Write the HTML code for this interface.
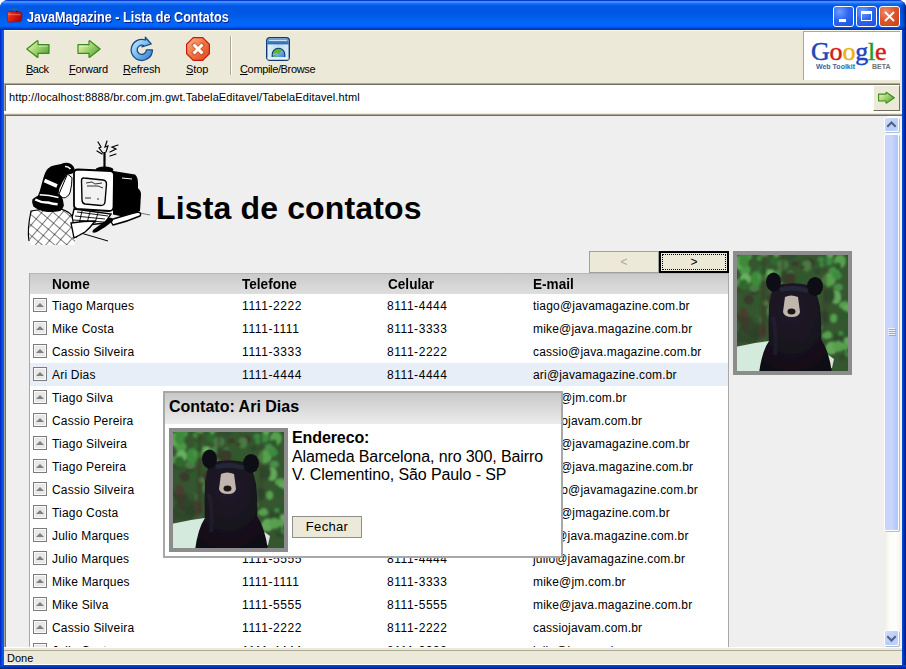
<!DOCTYPE html>
<html><head><meta charset="utf-8">
<style>
*{margin:0;padding:0;box-sizing:border-box}
html,body{width:906px;height:669px;overflow:hidden;background:#fff;font-family:"Liberation Sans",sans-serif}
.a{position:absolute}
svg{position:absolute;overflow:visible}
#win{position:absolute;left:0;top:0;width:906px;height:669px;background:linear-gradient(90deg,#0020c0 0,#0a4ee0 2px,#0a58f0 3px,#0a4ee0 902px,#0030b0 904px,#001a80 906px);border-radius:8px 8px 0 0;overflow:hidden}
#title{left:0;top:0;width:906px;height:30px;background:linear-gradient(#0a3ed0 0px,#0a3ed0 1px,#3d8eff 1px,#3a90ff 3px,#1a74fa 3px,#0862ee 5px,#0058e4 6px,#0058e4 13px,#005ee8 17px,#0064f4 21px,#0066fa 26px,#0058ea 27px,#0040c8 28.5px,#0030b0 30px)}
#ttext{left:27px;top:9px;color:#fff;font-weight:bold;font-size:14px;transform:scaleX(0.9);transform-origin:0 0;text-shadow:1px 1px 0 #0a1e8c;white-space:nowrap}
.tb{top:6px;width:21px;height:21px;border:1px solid #fff;border-radius:3px;background:radial-gradient(circle at 30% 25%,#6d9cff 0,#2f66f0 45%,#1a50e0 100%)}
#frame{left:4px;top:29px;width:898px;height:636px;background:#ece9d8}
.lbl{position:absolute;top:34px;font-size:11px;color:#000;white-space:nowrap}
.lbl u{text-decoration:underline}
#addr{left:4px;top:83px;width:896px;height:28px;background:#fff;border-top:1px solid #aca899;border-left:1px solid #aca899;box-shadow:inset 1px 1px 0 #716f64}
#content{left:4px;top:115px;width:898px;height:532px;background:#efefef;border-top:1px solid #716f64;border-left:1px solid #aca899;box-shadow:inset 1px 0 0 #716f64;overflow:hidden}
#status{left:4px;top:647px;width:898px;height:18px;background:#ece9d8;border-top:1px solid #fff;border-bottom:1px solid #fff}
#tbl{position:absolute;left:24px;top:157px;width:700px;height:400px;border-left:1px solid #a8a8a8;border-right:1px solid #a8a8a8;background:#fff}
.row{position:absolute;left:0;width:698px;height:23px;font-size:12px;color:#000;white-space:nowrap;background:#fff}
.row span{position:absolute;top:5px}
.c1{left:22px;letter-spacing:0.2px}.c2{left:212px;letter-spacing:0.6px}.c3{left:357px;letter-spacing:0.55px}.c4{left:503px;letter-spacing:0.18px}
.sb{position:absolute;left:3px;top:4px;width:14px;height:14px;border:1px solid #7b7b7b;box-shadow:inset 0 0 0 1px #fafafa;background:#e8e8e8}
.sb:after{content:"";position:absolute;left:2px;top:4px;border-left:4px solid transparent;border-right:4px solid transparent;border-bottom:4px solid #808080}
.hd{position:absolute;top:3.4px;font-size:14px;transform:scaleX(0.97);transform-origin:0 0;font-weight:bold}
</style></head><body>
<div id="win">
  <div id="frame" class="a">
    <div class="a" style="left:0;top:1px;width:898px;height:1px;background:#fcf8e4"></div>
    <!-- back -->
    <svg style="left:22px;top:11px" width="24" height="19" viewBox="0 0 24 19">
      <defs><linearGradient id="gb" x1="0" y1="0" x2="1" y2="0.7"><stop offset="0" stop-color="#e8f8c0"/><stop offset="0.35" stop-color="#c0e488"/><stop offset="1" stop-color="#5aa83a"/></linearGradient></defs>
      <path d="M0.8 9 L11.3 0.8 Q12 0.5 12 1.5 L12 4.6 L23 4.6 L23 13.3 L12 13.3 L12 16.8 Q12 17.6 11.3 17.2 Z" fill="url(#gb)" stroke="#3a8a1e" stroke-width="1.2" stroke-linejoin="round"/>
      <path d="M13 6.2 L21.5 6.2" stroke="#e8f6d0" stroke-width="0.8" opacity="0.8"/>
    </svg>
    <!-- forward -->
    <svg style="left:73px;top:11px" width="24" height="19" viewBox="0 0 24 19">
      <defs><linearGradient id="gf" x1="0" y1="0" x2="1" y2="0.7"><stop offset="0" stop-color="#e8f8c0"/><stop offset="0.35" stop-color="#c0e488"/><stop offset="1" stop-color="#5aa83a"/></linearGradient></defs>
      <path d="M23.2 9 L12.7 0.8 Q12 0.5 12 1.5 L12 4.6 L1 4.6 L1 13.3 L12 13.3 L12 16.8 Q12 17.6 12.7 17.2 Z" fill="url(#gf)" stroke="#3a8a1e" stroke-width="1.2" stroke-linejoin="round"/>
      <path d="M2.5 6.2 L11 6.2" stroke="#e8f6d0" stroke-width="0.8" opacity="0.8"/>
    </svg>
    <!-- refresh -->
    <svg style="left:127px;top:8px" width="23" height="24" viewBox="0 0 23 24">
      <defs><linearGradient id="gr" x1="0" y1="0" x2="1" y2="1"><stop offset="0" stop-color="#d8f0ff"/><stop offset="0.4" stop-color="#8cc8f4"/><stop offset="1" stop-color="#2c78c8"/></linearGradient></defs>
      <path d="M21.4 12.9 A10.6 10.6 0 1 1 14.5 3 L14.3 0.2 L20.2 7 L10.9 9.9 L12.4 8.5 A4.6 4.6 0 1 0 15.4 12.9 Z" fill="url(#gr)" stroke="#154a8c" stroke-width="1.3" stroke-linejoin="round"/>
    </svg>
    <!-- stop -->
    <svg style="left:182px;top:8px" width="24" height="24" viewBox="0 0 24 24">
      <defs><linearGradient id="gs" x1="0" y1="0" x2="1" y2="1"><stop offset="0" stop-color="#fbb890"/><stop offset="0.45" stop-color="#f07a48"/><stop offset="1" stop-color="#e04418"/></linearGradient></defs>
      <path d="M7.3 0.6 L16.7 0.6 L23.4 7.3 L23.4 16.7 L16.7 23.4 L7.3 23.4 L0.6 16.7 L0.6 7.3 Z" fill="url(#gs)" stroke="#c81810" stroke-width="1.2"/>
      <path d="M8.3 8.3 L15.7 15.7 M15.7 8.3 L8.3 15.7" stroke="#a03020" stroke-width="4.4" stroke-linecap="square" opacity="0.55"/>
      <path d="M8.6 8.6 L15.4 15.4 M15.4 8.6 L8.6 15.4" stroke="#fff" stroke-width="3" stroke-linecap="square"/>
    </svg>
    <!-- separator -->
    <div class="a" style="left:226px;top:7px;width:1px;height:39px;background:#aca899"></div>
    <div class="a" style="left:227px;top:7px;width:1px;height:39px;background:#fff"></div>
    <!-- compile -->
    <svg style="left:262px;top:8px" width="24" height="24" viewBox="0 0 24 24">
      <defs><linearGradient id="gc1" x1="0" y1="0" x2="0" y2="1"><stop offset="0" stop-color="#7ab0e0"/><stop offset="1" stop-color="#2a68b0"/></linearGradient>
      <linearGradient id="gc2" x1="0" y1="0" x2="1" y2="0"><stop offset="0" stop-color="#e4f2fc"/><stop offset="0.5" stop-color="#bcdcf6"/><stop offset="1" stop-color="#d8ecfa"/></linearGradient>
      <linearGradient id="gc3" x1="0" y1="0" x2="1" y2="1"><stop offset="0" stop-color="#d0ecff"/><stop offset="1" stop-color="#2a78c8"/></linearGradient></defs>
      <rect x="0.7" y="0.7" width="22.6" height="22.6" rx="3" fill="url(#gc2)" stroke="#0e3a78" stroke-width="1.4"/>
      <path d="M1.4 3.5 Q1.4 1.4 3.5 1.4 L20.5 1.4 Q22.6 1.4 22.6 3.5 L22.6 6.6 L1.4 6.6 Z" fill="url(#gc1)"/>
      <rect x="3" y="3" width="18" height="1" fill="#c8e0f8"/>
      <rect x="1.4" y="6.4" width="21.2" height="0.9" fill="#1a4a88"/>
      <clipPath id="glc"><path d="M6.2 20 L6.2 17.5 A6.3 6.3 0 0 1 18.8 17.5 L18.8 20 Z"/></clipPath>
      <g clip-path="url(#glc)"><rect x="5" y="10" width="15" height="11" fill="url(#gc3)"/>
      <path d="M5 12 L14 10 Q16 12 15.5 14 Q14 15 13.5 17 Q12 17.5 11.5 16 Q10 15.5 9 17 Q7 16 5 17 Z M5 19 Q8 17.5 10.5 18.5 L10 21 L5 21 Z" fill="#5ab82a"/></g>
      <path d="M6.2 20 L6.2 17.5 A6.3 6.3 0 0 1 18.8 17.5 L18.8 20" fill="none" stroke="#0e3a78" stroke-width="1.1"/>
      <rect x="1.4" y="20.4" width="21.2" height="2.2" fill="#e8eef4"/>
    </svg>
    <div class="lbl" style="left:22px;letter-spacing:-0.5px"><u>B</u>ack</div>
    <div class="lbl" style="left:65px;letter-spacing:-0.2px"><u>F</u>orward</div>
    <div class="lbl" style="left:119px;letter-spacing:-0.2px"><u>R</u>efresh</div>
    <div class="lbl" style="left:182px;letter-spacing:-0.1px"><u>S</u>top</div>
    <div class="lbl" style="left:236px;letter-spacing:-0.35px"><u>C</u>ompile/Browse</div>
    <!-- google box -->
    <div class="a" style="left:799px;top:2px;width:97px;height:49px;background:#fff;border-top:1px solid #aca899;border-left:1px solid #aca899"></div>
    <div class="a" style="left:807px;top:10px;font-family:'Liberation Serif',serif;font-size:26px;letter-spacing:-0.2px;white-space:nowrap;line-height:1;-webkit-text-stroke:0.45px currentColor"><span style="color:#2244b8">G</span><span style="color:#d02018">o</span><span style="color:#e8b410">o</span><span style="color:#2244c0">g</span><span style="color:#18a028">l</span><span style="color:#d02018">e</span></div>
    <div class="a" style="left:812px;top:34px;font-size:7px;font-weight:bold;color:#3a64a0;white-space:nowrap">Web Toolkit</div>
    <div class="a" style="left:868px;top:34px;font-size:7px;font-weight:bold;color:#707070;white-space:nowrap">BETA</div>
  </div>
  <div id="title" class="a"></div>
  <!-- toolbox icon -->
  <svg style="left:6px;top:8px" width="17" height="15" viewBox="0 0 17 15">
    <defs><linearGradient id="gt" x1="0" y1="0" x2="1" y2="0.4"><stop offset="0" stop-color="#ff7a50"/><stop offset="0.3" stop-color="#e82818"/><stop offset="1" stop-color="#b00808"/></linearGradient></defs>
    <path d="M5 2.8 Q5 1.2 7 1.2 L9.5 1.2 Q11 1.2 11 2.8" fill="none" stroke="#5a5a5a" stroke-width="1.2"/>
    <circle cx="5.2" cy="3.6" r="0.9" fill="#111"/><circle cx="10.8" cy="3.6" r="0.9" fill="#111"/>
    <path d="M1.5 5.5 Q1.5 3.8 3.5 3.8 L14 4.2 Q15.8 4.4 15.8 6.2 L15.8 11.8 Q15.8 13.6 14 13.6 L3.5 14.2 Q1.3 14.2 1.3 12.2 Z" fill="url(#gt)" stroke="#8a0a0a" stroke-width="0.6"/>
    <path d="M2.5 6.5 L14.5 6.8" stroke="#ff9a80" stroke-width="0.8" opacity="0.7"/>
  </svg>
  <div class="a" style="left:900px;top:0;width:6px;height:30px;background:linear-gradient(90deg,rgba(0,20,120,0),rgba(0,20,120,0.35) 60%,rgba(0,10,90,0.8))"></div>
  <div id="ttext" class="a">JavaMagazine - Lista de Contatos</div>
  <div class="a tb" style="left:833px"><div class="a" style="left:5px;top:12px;width:7px;height:3px;background:#fff"></div></div>
  <div class="a tb" style="left:856px"><div class="a" style="left:4px;top:4px;width:11px;height:10px;border:1px solid #fff;border-top:3px solid #fff"></div></div>
  <div class="a tb" style="left:879px;background:radial-gradient(circle at 30% 25%,#f08a6a 0,#e0562a 45%,#c8401c 100%)">
    <svg style="left:4px;top:4px" width="11" height="11"><path d="M1 1 L10 10 M10 1 L1 10" stroke="#fff" stroke-width="1.8"/></svg>
  </div>

  <div id="addr" class="a">
    <div class="a" style="left:4px;top:7px;font-size:11px;letter-spacing:0.12px;white-space:nowrap">http://localhost:8888/br.com.jm.gwt.TabelaEditavel/TabelaEditavel.html</div>
    <div class="a" style="left:868px;top:1px;width:27px;height:26px;background:#ece9d8;border-top:1px solid #fff;border-left:1px solid #fff;border-right:1px solid #716f64;border-bottom:1px solid #716f64">
      <svg style="left:4px;top:6px" width="17" height="13" viewBox="0 0 17 13">
        <path d="M16.3 5.8 L8.6 0.5 Q8 0.2 8 1 L8 2.1 L0.6 2.1 L0.6 9 L8 9 L8 10.6 Q8 11.4 8.6 11.1 Z" fill="url(#gf)" stroke="#3a8a1e" stroke-width="1.1" stroke-linejoin="round"/>
      </svg>
    </div>
  </div>
  <div class="a" style="left:4px;top:111px;width:898px;height:2px;background:#fdfcf5"></div><div class="a" style="left:4px;top:114px;width:898px;height:1px;background:#aca899"></div>
  <div id="content" class="a">
    <svg style="left:23px;top:22px" width="125" height="110" viewBox="28 138 125 110">
<defs><pattern id="hatch" width="8" height="8" patternUnits="userSpaceOnUse" patternTransform="rotate(40)"><rect width="8" height="8" fill="#fff"/><path d="M0 0 H8 M0 0 V8" stroke="#000" stroke-width="1"/></pattern></defs>
<g stroke="#000" fill="none" stroke-width="1.2" stroke-linecap="round">
<path d="M98 142 L101 147 L99 148 L103 153"/><path d="M107 141 L105 147 L108 146 L106 152"/><path d="M118 145 L112 147 L116 149 L110 152"/><path d="M97 151 L102 154"/><path d="M110 156 L116 154"/>
</g>
<path d="M104.5 152 L104.5 168" stroke="#000" stroke-width="2.2"/>
<ellipse cx="104.5" cy="169.5" rx="9" ry="3" fill="#000"/>
<path d="M113 171 L135 174.5 Q138 177 138 183 L138 212.5 Q134 217 129.5 218 L113 214.5 Z" fill="#000"/>
<path d="M135 187 Q141 189 141 194 L140 211 L137 212 Z" fill="#000"/>
<path d="M122 178 L132 179" stroke="#fff" stroke-width="1"/>
<path d="M78 169.5 L111 171 Q114 171.5 114 175 L113.5 207 Q113 211 109 211 L77 209 Q74 208.5 74 205 L74 173 Q74 169.5 78 169.5 Z" fill="#fff" stroke="#000" stroke-width="1.8"/>
<path d="M84 178 L103 180 Q106.5 180.5 106.5 184 L105 202 Q104.5 205.5 101 205.5 L85 204 Q82 203.5 82 200 L81.5 181 Q81.5 177.5 84 178 Z" fill="#f2f2f2" stroke="#000" stroke-width="1.4"/>
<path d="M86 183 L92 182 L95 184 L102 183 M87 186 L98 186 L103 188 M85 198 L91 198 M97 199 L99 199" stroke="#000" stroke-width="0.8" fill="none"/>
<path d="M140 213 L150 215" stroke="#555" stroke-width="0.8" fill="none"/>
<path d="M110 220 Q126 215 138 212 Q142 213 140 216 Q126 222 113 225 Z" fill="#fff" stroke="#000" stroke-width="1.4"/>
<path d="M74 209 L111 214 L105 223 L70 227 Z" fill="#fff" stroke="#000" stroke-width="1.4"/>
<path d="M77 212 L108 216 M75 216 L105 219 M73 220 L104 222 M82 211 L79 224 M90 212 L87 223 M98 213 L95 223" stroke="#000" stroke-width="0.9"/>
<path d="M93 230 Q101 224 109 218 Q113 217 113 221 Q106 227 97 232 Q91 234 93 230 Z" fill="#000"/>
<path d="M74 231 L108 241" stroke="#000" stroke-width="1"/>
<path d="M31 211 Q46 208 61 209 Q70 212 72 216 L76 238 L74 245 L31 245 Q28 232 29 230 Z" fill="url(#hatch)"/><path d="M29 241 Q27 230 31 211 Q46 208 61 209 Q70 212 72 216 L76 238" fill="none" stroke="#000" stroke-width="1.2"/>
<path d="M71 223 Q84 221 95 221 Q90 228 85 232 Q78 236 74 238 Z" fill="#fff" stroke="#000" stroke-width="1.3"/>
<path d="M59 194 Q62 199 65.7 197.5 Q70 195 70.2 192 Q72 185 72 177.7 L67.5 174 Z" fill="#fff" stroke="#000" stroke-width="1"/>
<path d="M43.2 178.6 Q45 172 47.7 168.8 Q51 165.5 54.9 165.2 L61.2 164 Q64 162.5 68.4 162.9 Q73 164 74.6 168.8 Q74.5 172 72.8 173.2 Q70 174.5 67.5 174 Q62 182 59.4 188.5 L58.5 193.9 Q62 196 63 200 L63.9 205.5 Q63 209 60.3 210.9 Q53 212.5 45.9 211.8 Q38 210 33.4 206.4 Q31.5 202 32.5 199.3 Q35 197 37.9 195.7 L39.7 191.2 Z" fill="#000"/>
<path d="M65 166.5 Q68 166 70.5 169" stroke="#fff" stroke-width="1.6" fill="none"/>
<path d="M44.5 180.5 Q50 183 57 186" stroke="#fff" stroke-width="3.6" fill="none"/>
<path d="M39.7 194.8 Q49 195 58.5 197.5" stroke="#fff" stroke-width="1.5" fill="none"/>
<path d="M35.2 199.5 Q42 203 48 202.5 Q53 204 57.6 204.3" stroke="#fff" stroke-width="2.4" fill="none"/>
</svg>

    <div class="a" style="left:151px;top:76px;font-size:32px;font-weight:bold;letter-spacing:0.15px;white-space:nowrap;line-height:1">Lista de contatos</div>
    <!-- pager -->
    <div class="a" style="left:584px;top:135px;width:70px;height:22px;background:#ece9d8;border:1px solid #a0a0a0;font-size:12px;color:#aca899;text-align:center;line-height:20px">&lt;</div>
    <div class="a" style="left:654px;top:135px;width:70px;height:22px;background:#ece9d8;border:2px solid #000;font-size:12px;color:#000;text-align:center;line-height:18px"><div class="a" style="left:1px;top:1px;right:1px;bottom:1px;border:1px dotted #000"></div>&gt;</div>
    <div id="tbl">
      <div class="a" style="left:0;top:0;width:698px;height:21px;background:linear-gradient(#b8b8b8 0,#b8b8b8 1px,#cbcbcb 1px,#dedede)">
        <span class="hd" style="left:22px">Nome</span><span class="hd" style="left:212px">Telefone</span><span class="hd" style="left:358px">Celular</span><span class="hd" style="left:503px">E-mail</span>
      </div>
      <div class="row" style="top:21px"><i class="sb"></i><span class="c1">Tiago Marques</span><span class="c2">1111-2222</span><span class="c3">8111-4444</span><span class="c4">tiago@javamagazine.com.br</span></div>
<div class="row" style="top:44px"><i class="sb"></i><span class="c1">Mike Costa</span><span class="c2">1111-1111</span><span class="c3">8111-3333</span><span class="c4">mike@java.magazine.com.br</span></div>
<div class="row" style="top:67px"><i class="sb"></i><span class="c1">Cassio Silveira</span><span class="c2">1111-3333</span><span class="c3">8111-2222</span><span class="c4">cassio@java.magazine.com.br</span></div>
<div class="row" style="top:90px;background:#e8eef7"><i class="sb"></i><span class="c1">Ari Dias</span><span class="c2">1111-4444</span><span class="c3">8111-4444</span><span class="c4">ari@javamagazine.com.br</span></div>
<div class="row" style="top:113px"><i class="sb"></i><span class="c1">Tiago Silva</span><span class="c2">1111-5555</span><span class="c3">8111-5555</span><span class="c4">tiago@jm.com.br</span></div>
<div class="row" style="top:136px"><i class="sb"></i><span class="c1">Cassio Pereira</span><span class="c2">1111-2222</span><span class="c3">8111-2222</span><span class="c4">cassiojavam.com.br</span></div>
<div class="row" style="top:159px"><i class="sb"></i><span class="c1">Tiago Silveira</span><span class="c2">1111-3333</span><span class="c3">8111-3333</span><span class="c4">tiago@javamagazine.com.br</span></div>
<div class="row" style="top:182px"><i class="sb"></i><span class="c1">Tiago Pereira</span><span class="c2">1111-4444</span><span class="c3">8111-4444</span><span class="c4">tiago@java.magazine.com.br</span></div>
<div class="row" style="top:205px"><i class="sb"></i><span class="c1">Cassio Silveira</span><span class="c2">1111-1111</span><span class="c3">8111-1111</span><span class="c4">cassio@javamagazine.com.br</span></div>
<div class="row" style="top:228px"><i class="sb"></i><span class="c1">Tiago Costa</span><span class="c2">1111-2222</span><span class="c3">8111-2222</span><span class="c4">tiago@jmagazine.com.br</span></div>
<div class="row" style="top:251px"><i class="sb"></i><span class="c1">Julio Marques</span><span class="c2">1111-3333</span><span class="c3">8111-3333</span><span class="c4">julio@java.magazine.com.br</span></div>
<div class="row" style="top:274px"><i class="sb"></i><span class="c1">Julio Marques</span><span class="c2">1111-5555</span><span class="c3">8111-4444</span><span class="c4">julio@javamagazine.com.br</span></div>
<div class="row" style="top:297px"><i class="sb"></i><span class="c1">Mike Marques</span><span class="c2">1111-1111</span><span class="c3">8111-3333</span><span class="c4">mike@jm.com.br</span></div>
<div class="row" style="top:320px"><i class="sb"></i><span class="c1">Mike Silva</span><span class="c2">1111-5555</span><span class="c3">8111-5555</span><span class="c4">mike@java.magazine.com.br</span></div>
<div class="row" style="top:343px"><i class="sb"></i><span class="c1">Cassio Silveira</span><span class="c2">1111-2222</span><span class="c3">8111-2222</span><span class="c4">cassiojavam.com.br</span></div>
<div class="row" style="top:366px"><i class="sb"></i><span class="c1">Julio Costa</span><span class="c2">1111-4444</span><span class="c3">8111-3333</span><span class="c4">julio@jm.com.br</span></div>
    </div>
    <!-- bear right -->
    <div class="a" style="left:728px;top:135px;width:119px;height:124px;background:#8c8c8c;padding:4px"><svg style="position:static;display:block" width="111" height="116" viewBox="0 0 111 116"><defs><filter id="bl" x="-5%" y="-5%" width="110%" height="110%"><feGaussianBlur stdDeviation="1.1"/></filter><filter id="bl2" x="-5%" y="-5%" width="110%" height="110%"><feGaussianBlur stdDeviation="0.6"/></filter><radialGradient id="bh" cx="0.45" cy="0.3" r="0.7"><stop offset="0" stop-color="#221c2a"/><stop offset="1" stop-color="#110d16"/></radialGradient><clipPath id="bc"><rect width="111" height="116"/></clipPath></defs><g clip-path="url(#bc)"><rect width="111" height="116" fill="#35562f"/><g filter="url(#bl)"><ellipse cx="49.9" cy="57.5" rx="5.7" ry="5.6" fill="#2e4e30"/><ellipse cx="97.0" cy="17.5" rx="5.3" ry="5.2" fill="#63a85a"/><ellipse cx="89.8" cy="7.2" rx="3.6" ry="2.4" fill="#2e4a2c"/><ellipse cx="71.2" cy="61.3" rx="3.9" ry="3.7" fill="#2e4e30"/><ellipse cx="73.1" cy="64.3" rx="5.4" ry="3.5" fill="#2f5a2c"/><ellipse cx="19.3" cy="23.1" rx="2.6" ry="2.5" fill="#4a9844"/><ellipse cx="66.1" cy="18.1" rx="3.3" ry="2.8" fill="#2f5a2c"/><ellipse cx="74.5" cy="46.4" rx="3.5" ry="4.9" fill="#2f5a2c"/><ellipse cx="79.8" cy="31.0" rx="3.3" ry="2.7" fill="#3a8a40"/><ellipse cx="62.9" cy="8.7" rx="2.9" ry="2.4" fill="#2f5a2c"/><ellipse cx="109.1" cy="88.5" rx="2.5" ry="1.9" fill="#3a8a40"/><ellipse cx="52.0" cy="102.9" rx="3.9" ry="2.6" fill="#4a7a44"/><ellipse cx="88.1" cy="26.1" rx="2.8" ry="2.4" fill="#488e46"/><ellipse cx="85.7" cy="9.7" rx="3.4" ry="2.3" fill="#3a8a40"/><ellipse cx="51.4" cy="49.6" rx="4.9" ry="3.7" fill="#2e4e30"/><ellipse cx="19.3" cy="76.0" rx="3.0" ry="3.3" fill="#2a4a28"/><ellipse cx="43.2" cy="103.9" rx="2.5" ry="3.2" fill="#2e4e30"/><ellipse cx="32.6" cy="92.6" rx="3.2" ry="3.0" fill="#2e4e30"/><ellipse cx="72.1" cy="7.8" rx="6.0" ry="4.6" fill="#3a3a2c"/><ellipse cx="-1.9" cy="62.9" rx="5.4" ry="4.9" fill="#2a4a28"/><ellipse cx="7.5" cy="59.9" rx="3.4" ry="3.6" fill="#4a3c30"/><ellipse cx="69.8" cy="10.7" rx="4.6" ry="5.8" fill="#4a7a44"/><ellipse cx="98.4" cy="16.7" rx="3.0" ry="4.0" fill="#63a85a"/><ellipse cx="26.2" cy="17.5" rx="5.1" ry="6.9" fill="#58a850"/><ellipse cx="77.4" cy="38.9" rx="4.2" ry="2.8" fill="#3a8a40"/><ellipse cx="9.1" cy="1.2" rx="5.9" ry="4.6" fill="#4a9844"/><ellipse cx="27.1" cy="86.0" rx="4.6" ry="3.8" fill="#3a5a34"/><ellipse cx="105.7" cy="102.5" rx="2.9" ry="2.9" fill="#2e4a2c"/><ellipse cx="96.7" cy="63.3" rx="3.5" ry="4.6" fill="#56a04e"/><ellipse cx="84.6" cy="4.5" rx="3.9" ry="3.1" fill="#3a8a40"/><ellipse cx="17.6" cy="36.8" rx="4.5" ry="3.2" fill="#3a3a2c"/><ellipse cx="13.2" cy="45.6" rx="3.7" ry="4.3" fill="#2e4e30"/><ellipse cx="65.4" cy="12.2" rx="2.6" ry="1.6" fill="#3a3a2c"/><ellipse cx="79.0" cy="101.0" rx="2.6" ry="2.9" fill="#488e46"/><ellipse cx="4.9" cy="30.6" rx="3.0" ry="2.0" fill="#5a8a50"/><ellipse cx="60.9" cy="76.6" rx="5.7" ry="6.7" fill="#4a7a44"/><ellipse cx="89.8" cy="95.8" rx="3.7" ry="4.3" fill="#3a8a40"/><ellipse cx="98.9" cy="42.1" rx="5.3" ry="6.8" fill="#63a85a"/><ellipse cx="-1.3" cy="68.5" rx="3.8" ry="2.3" fill="#2a4a28"/><ellipse cx="6.4" cy="66.1" rx="6.0" ry="7.8" fill="#4a3c30"/><ellipse cx="42.4" cy="76.4" rx="4.5" ry="4.3" fill="#2e4e30"/><ellipse cx="6.8" cy="78.0" rx="2.6" ry="2.8" fill="#2e6a30"/><ellipse cx="-0.4" cy="100.4" rx="2.9" ry="3.5" fill="#2e6a30"/><ellipse cx="26.9" cy="-1.8" rx="3.6" ry="4.1" fill="#58a850"/><ellipse cx="57.7" cy="78.4" rx="3.7" ry="5.0" fill="#5a8a50"/><ellipse cx="101.3" cy="32.3" rx="4.8" ry="3.7" fill="#488e46"/><ellipse cx="91.0" cy="78.5" rx="3.2" ry="2.5" fill="#56a04e"/><ellipse cx="65.2" cy="31.2" rx="3.0" ry="3.0" fill="#2f5a2c"/><ellipse cx="80.2" cy="99.6" rx="3.5" ry="2.6" fill="#488e46"/><ellipse cx="52.1" cy="97.0" rx="5.4" ry="4.9" fill="#2e4e30"/><ellipse cx="54.8" cy="31.1" rx="5.4" ry="7.5" fill="#5a8a50"/><ellipse cx="34.5" cy="86.5" rx="3.5" ry="3.8" fill="#3a3a2c"/><ellipse cx="63.8" cy="30.4" rx="5.3" ry="3.2" fill="#4a7a44"/><ellipse cx="44.4" cy="17.5" rx="5.2" ry="4.2" fill="#4a7a44"/><ellipse cx="90.2" cy="103.3" rx="2.9" ry="2.0" fill="#63a85a"/><ellipse cx="73.6" cy="84.2" rx="5.9" ry="6.7" fill="#4a7a44"/><ellipse cx="93.4" cy="24.7" rx="5.0" ry="6.0" fill="#63a85a"/><ellipse cx="80.6" cy="16.3" rx="3.5" ry="3.0" fill="#2e4a2c"/><ellipse cx="107.8" cy="51.0" rx="6.0" ry="4.4" fill="#2e4a2c"/><ellipse cx="103.0" cy="6.4" rx="5.8" ry="6.8" fill="#56a04e"/><ellipse cx="49.7" cy="18.3" rx="5.6" ry="3.4" fill="#2e4e30"/><ellipse cx="63.6" cy="92.0" rx="5.3" ry="7.2" fill="#5a8a50"/><ellipse cx="35.2" cy="103.1" rx="2.8" ry="3.7" fill="#2f5a2c"/><ellipse cx="22.0" cy="94.2" rx="5.9" ry="8.2" fill="#3f6a3a"/><ellipse cx="111.3" cy="97.7" rx="3.4" ry="4.0" fill="#3a8a40"/><ellipse cx="37.8" cy="5.9" rx="4.0" ry="4.2" fill="#2e6a2e"/><ellipse cx="54.0" cy="0.1" rx="5.3" ry="3.5" fill="#2f5a2c"/><ellipse cx="17.2" cy="33.2" rx="5.3" ry="3.7" fill="#4a7a44"/><ellipse cx="114.0" cy="94.3" rx="4.3" ry="4.9" fill="#488e46"/><ellipse cx="107.7" cy="50.2" rx="5.8" ry="3.9" fill="#56a04e"/><ellipse cx="48.4" cy="57.3" rx="5.4" ry="5.7" fill="#4a7a44"/><ellipse cx="58.2" cy="88.1" rx="4.5" ry="3.8" fill="#5a8a50"/><ellipse cx="108.7" cy="91.0" rx="4.6" ry="3.9" fill="#56a04e"/><ellipse cx="110.3" cy="53.6" rx="4.5" ry="3.4" fill="#63a85a"/><ellipse cx="10.4" cy="-2.5" rx="3.8" ry="3.9" fill="#3c8a3a"/><ellipse cx="57.4" cy="40.3" rx="5.3" ry="5.6" fill="#5a8a50"/><ellipse cx="7.9" cy="15.0" rx="5.8" ry="5.6" fill="#4a9844"/><ellipse cx="28.5" cy="48.1" rx="2.9" ry="2.8" fill="#5a8a50"/><ellipse cx="58.4" cy="8.7" rx="4.0" ry="2.5" fill="#3a3a2c"/><ellipse cx="12.1" cy="81.2" rx="2.6" ry="1.9" fill="#3a5a34"/><ellipse cx="-1.6" cy="27.7" rx="5.0" ry="4.0" fill="#4a9844"/><ellipse cx="9.3" cy="75.9" rx="2.9" ry="3.0" fill="#4a3c30"/><ellipse cx="81.0" cy="72.7" rx="5.6" ry="3.4" fill="#2e4a2c"/><ellipse cx="45.4" cy="54.2" rx="3.1" ry="2.3" fill="#2e4e30"/><ellipse cx="71.7" cy="54.2" rx="5.5" ry="6.0" fill="#4a7a44"/><ellipse cx="24.2" cy="77.0" rx="5.3" ry="7.1" fill="#4a3c30"/><ellipse cx="67.6" cy="93.2" rx="3.2" ry="3.9" fill="#4a7a44"/><ellipse cx="100.8" cy="11.5" rx="3.3" ry="3.9" fill="#2a5a2c"/><ellipse cx="42.4" cy="44.0" rx="5.8" ry="6.0" fill="#4a7a44"/><ellipse cx="20.5" cy="64.8" rx="5.3" ry="3.6" fill="#3f6a3a"/><ellipse cx="76.8" cy="95.4" rx="5.9" ry="4.1" fill="#63a85a"/><ellipse cx="71.3" cy="34.1" rx="6.0" ry="7.6" fill="#2f5a2c"/><ellipse cx="53.4" cy="-0.4" rx="5.2" ry="5.6" fill="#2e4e30"/><ellipse cx="53.3" cy="17.5" rx="2.9" ry="2.1" fill="#4a7a44"/><ellipse cx="112.9" cy="97.1" rx="2.8" ry="1.8" fill="#2e4a2c"/><ellipse cx="51.1" cy="79.6" rx="3.6" ry="3.5" fill="#2e4e30"/><ellipse cx="38.5" cy="19.7" rx="3.8" ry="4.2" fill="#3c8a3a"/><ellipse cx="95.8" cy="16.6" rx="4.1" ry="4.9" fill="#488e46"/><ellipse cx="104.9" cy="62.3" rx="2.8" ry="3.5" fill="#2a5a2c"/><ellipse cx="101.5" cy="83.6" rx="5.0" ry="6.4" fill="#2e4a2c"/><ellipse cx="106.9" cy="58.5" rx="3.2" ry="3.4" fill="#2a5a2c"/><ellipse cx="91.2" cy="24.9" rx="5.7" ry="6.8" fill="#56a04e"/><ellipse cx="92.3" cy="40.8" rx="5.6" ry="7.4" fill="#2e4a2c"/><ellipse cx="40.3" cy="43.6" rx="3.1" ry="2.4" fill="#4a7a44"/><ellipse cx="5.3" cy="33.9" rx="4.1" ry="2.5" fill="#3a3a2c"/><ellipse cx="112.9" cy="94.5" rx="2.7" ry="2.2" fill="#2e4a2c"/><ellipse cx="32.0" cy="20.3" rx="3.9" ry="2.9" fill="#3c8a3a"/><ellipse cx="42.6" cy="105.0" rx="4.7" ry="5.5" fill="#5a8a50"/><ellipse cx="111.7" cy="-0.5" rx="4.7" ry="5.5" fill="#2a5a2c"/><ellipse cx="48.9" cy="51.5" rx="5.2" ry="5.8" fill="#2f5a2c"/><ellipse cx="8.5" cy="24.1" rx="5.7" ry="5.9" fill="#6ab060"/><ellipse cx="45.6" cy="53.2" rx="5.5" ry="3.7" fill="#5a8a50"/><ellipse cx="91.7" cy="5.2" rx="4.6" ry="5.5" fill="#3a8a40"/><ellipse cx="42.2" cy="98.4" rx="3.9" ry="5.3" fill="#5a8a50"/><ellipse cx="60.4" cy="61.4" rx="4.0" ry="4.0" fill="#3a3a2c"/><ellipse cx="58.6" cy="61.6" rx="3.8" ry="3.1" fill="#3a3a2c"/><ellipse cx="62.6" cy="27.6" rx="5.0" ry="4.2" fill="#2f5a2c"/><ellipse cx="87.4" cy="60.3" rx="4.7" ry="4.4" fill="#2e4a2c"/><ellipse cx="42.6" cy="93.9" rx="5.1" ry="3.3" fill="#3a3a2c"/><ellipse cx="5.6" cy="94.8" rx="4.0" ry="3.9" fill="#3a5a34"/><ellipse cx="2.3" cy="7.6" rx="5.3" ry="7.1" fill="#58a850"/><ellipse cx="111.5" cy="85.2" rx="4.6" ry="3.2" fill="#63a85a"/><ellipse cx="45.8" cy="9.7" rx="5.5" ry="4.9" fill="#4a7a44"/><ellipse cx="11.5" cy="44.8" rx="4.8" ry="4.7" fill="#3a3a2c"/><ellipse cx="71.8" cy="70.7" rx="3.8" ry="4.5" fill="#4a7a44"/><ellipse cx="108.5" cy="76.3" rx="3.3" ry="2.3" fill="#2a5a2c"/><ellipse cx="88.8" cy="64.5" rx="3.8" ry="3.1" fill="#2e4a2c"/><ellipse cx="81.8" cy="72.5" rx="3.2" ry="2.6" fill="#56a04e"/><ellipse cx="19.2" cy="23.9" rx="5.9" ry="7.9" fill="#3c8a3a"/><ellipse cx="70.5" cy="-2.0" rx="3.4" ry="2.1" fill="#2f5a2c"/><ellipse cx="9.0" cy="55.5" rx="2.8" ry="1.8" fill="#3a5a34"/><ellipse cx="61.4" cy="65.2" rx="3.8" ry="3.7" fill="#4a7a44"/><ellipse cx="36.6" cy="50.4" rx="3.0" ry="3.8" fill="#2f5a2c"/><ellipse cx="49.3" cy="85.8" rx="5.4" ry="6.6" fill="#5a8a50"/><ellipse cx="46.7" cy="24.9" rx="5.3" ry="4.8" fill="#2e4e30"/><ellipse cx="35.1" cy="56.3" rx="5.1" ry="6.8" fill="#5a8a50"/><ellipse cx="73.5" cy="59.7" rx="4.1" ry="3.5" fill="#2e4e30"/><ellipse cx="6.7" cy="57.9" rx="4.2" ry="4.8" fill="#4a3c30"/><ellipse cx="93.3" cy="-2.0" rx="3.6" ry="4.8" fill="#63a85a"/><ellipse cx="6.6" cy="29.8" rx="5.0" ry="5.8" fill="#2e6a2e"/><ellipse cx="100.2" cy="20.6" rx="4.8" ry="4.1" fill="#3a8a40"/><ellipse cx="34.7" cy="44.6" rx="4.6" ry="6.1" fill="#3a3a2c"/><ellipse cx="48.2" cy="83.7" rx="3.6" ry="3.0" fill="#5a8a50"/><ellipse cx="110.2" cy="75.8" rx="4.3" ry="2.9" fill="#2a5a2c"/><ellipse cx="-0.2" cy="70.1" rx="4.5" ry="5.6" fill="#3f6a3a"/><ellipse cx="40.1" cy="39.1" rx="3.0" ry="3.3" fill="#4a7a44"/><ellipse cx="17.7" cy="79.0" rx="5.6" ry="4.6" fill="#2a4a28"/><ellipse cx="22.9" cy="3.2" rx="3.1" ry="2.6" fill="#3c8a3a"/><ellipse cx="73.2" cy="83.9" rx="2.7" ry="2.8" fill="#2e4e30"/><ellipse cx="6.8" cy="5.8" rx="5.1" ry="6.7" fill="#3c8a3a"/><ellipse cx="0.0" cy="67.6" rx="2.8" ry="3.6" fill="#2e6a30"/><ellipse cx="25.7" cy="20.8" rx="5.2" ry="5.3" fill="#4a9844"/><ellipse cx="43.1" cy="33.5" rx="5.9" ry="6.7" fill="#5a8a50"/><ellipse cx="54.1" cy="83.9" rx="2.8" ry="3.0" fill="#2f5a2c"/><ellipse cx="45.0" cy="86.2" rx="4.8" ry="6.2" fill="#5a8a50"/><ellipse cx="94.6" cy="93.0" rx="5.9" ry="6.5" fill="#63a85a"/><ellipse cx="39.4" cy="-1.9" rx="2.9" ry="3.9" fill="#58a850"/><ellipse cx="25.7" cy="14.5" rx="4.7" ry="5.4" fill="#2e6a2e"/><ellipse cx="20.9" cy="42.9" rx="3.5" ry="4.8" fill="#2f5a2c"/><ellipse cx="52.2" cy="75.9" rx="3.6" ry="2.6" fill="#4a7a44"/><ellipse cx="103.7" cy="78.3" rx="2.6" ry="2.5" fill="#3a8a40"/><ellipse cx="33.6" cy="18.3" rx="3.8" ry="4.0" fill="#6ab060"/><ellipse cx="80.9" cy="61.2" rx="3.3" ry="2.5" fill="#2a5a2c"/><ellipse cx="44.1" cy="95.4" rx="5.8" ry="6.4" fill="#2e4e30"/><ellipse cx="53.1" cy="25.1" rx="5.6" ry="7.5" fill="#3a3a2c"/><ellipse cx="74.2" cy="80.3" rx="2.8" ry="3.6" fill="#5a8a50"/><ellipse cx="2.8" cy="99.3" rx="5.3" ry="4.8" fill="#3f6a3a"/><ellipse cx="90.0" cy="80.6" rx="5.3" ry="3.4" fill="#56a04e"/><ellipse cx="101.4" cy="91.4" rx="5.7" ry="5.4" fill="#56a04e"/><ellipse cx="80.5" cy="62.5" rx="3.1" ry="2.2" fill="#2a5a2c"/><rect x="24" y="0" width="5" height="80" fill="#3a3428" opacity="0.45"/><rect x="44" y="0" width="4" height="30" fill="#3a3428" opacity="0.4"/><rect x="86" y="0" width="4" height="70" fill="#3a3028" opacity="0.35"/><rect x="0" y="62" width="22" height="26" fill="#2a3a26" opacity="0.5"/></g><g filter="url(#bl2)"><path d="M-2 92 L18 88 L32 86 L31 118 L-2 118 Z" fill="#d4eadc"/><path d="M90 99 L97 104 L95 113 L88 113 Z" fill="#dce4dc"/><path d="M36 31 Q57 25 78 32 L83 52 Q85 72 84 84 Q92 96 95 118 L22 118 Q25 96 32 86 Q31 70 32 50 Z" fill="url(#bh)"/><ellipse cx="36.5" cy="27" rx="7.5" ry="9.5" fill="#0f0c14"/><ellipse cx="78" cy="31.5" rx="8" ry="9.5" fill="#0f0c14"/><path d="M42 33 Q57 28 72 34 L70 38 Q57 34 44 37 Z" fill="#2e3850" opacity="0.45"/><path d="M34 62 Q38 80 36 100 L40 100 Q42 80 38 62 Z" fill="#3a4658" opacity="0.2"/><path d="M48 42 Q54 39 61 42 L63 57 Q62 62 55 62 Q47 62 46 57 Z" fill="#c0b6ae"/><ellipse cx="54.5" cy="56.5" rx="4" ry="3" fill="#1a1418"/></g></g></svg></div>
    <!-- dialog -->
    <div class="a" style="left:158px;top:275px;width:400px;height:167px;background:#fff;border:2px solid #a8a8a8">
      <div class="a" style="left:0;top:0;width:396px;height:31px;background:linear-gradient(#c8c8c8,#ececec)"></div>
      <div class="a" style="left:4px;top:5px;font-size:16px;font-weight:bold;white-space:nowrap">Contato: Ari Dias</div>
      <div class="a" style="left:4px;top:35px;width:119px;height:124px;background:#8c8c8c;padding:4px"><svg style="position:static;display:block" width="111" height="116" viewBox="0 0 111 116"><defs><filter id="bl" x="-5%" y="-5%" width="110%" height="110%"><feGaussianBlur stdDeviation="1.1"/></filter><filter id="bl2" x="-5%" y="-5%" width="110%" height="110%"><feGaussianBlur stdDeviation="0.6"/></filter><radialGradient id="bh" cx="0.45" cy="0.3" r="0.7"><stop offset="0" stop-color="#221c2a"/><stop offset="1" stop-color="#110d16"/></radialGradient><clipPath id="bc"><rect width="111" height="116"/></clipPath></defs><g clip-path="url(#bc)"><rect width="111" height="116" fill="#35562f"/><g filter="url(#bl)"><ellipse cx="49.9" cy="57.5" rx="5.7" ry="5.6" fill="#2e4e30"/><ellipse cx="97.0" cy="17.5" rx="5.3" ry="5.2" fill="#63a85a"/><ellipse cx="89.8" cy="7.2" rx="3.6" ry="2.4" fill="#2e4a2c"/><ellipse cx="71.2" cy="61.3" rx="3.9" ry="3.7" fill="#2e4e30"/><ellipse cx="73.1" cy="64.3" rx="5.4" ry="3.5" fill="#2f5a2c"/><ellipse cx="19.3" cy="23.1" rx="2.6" ry="2.5" fill="#4a9844"/><ellipse cx="66.1" cy="18.1" rx="3.3" ry="2.8" fill="#2f5a2c"/><ellipse cx="74.5" cy="46.4" rx="3.5" ry="4.9" fill="#2f5a2c"/><ellipse cx="79.8" cy="31.0" rx="3.3" ry="2.7" fill="#3a8a40"/><ellipse cx="62.9" cy="8.7" rx="2.9" ry="2.4" fill="#2f5a2c"/><ellipse cx="109.1" cy="88.5" rx="2.5" ry="1.9" fill="#3a8a40"/><ellipse cx="52.0" cy="102.9" rx="3.9" ry="2.6" fill="#4a7a44"/><ellipse cx="88.1" cy="26.1" rx="2.8" ry="2.4" fill="#488e46"/><ellipse cx="85.7" cy="9.7" rx="3.4" ry="2.3" fill="#3a8a40"/><ellipse cx="51.4" cy="49.6" rx="4.9" ry="3.7" fill="#2e4e30"/><ellipse cx="19.3" cy="76.0" rx="3.0" ry="3.3" fill="#2a4a28"/><ellipse cx="43.2" cy="103.9" rx="2.5" ry="3.2" fill="#2e4e30"/><ellipse cx="32.6" cy="92.6" rx="3.2" ry="3.0" fill="#2e4e30"/><ellipse cx="72.1" cy="7.8" rx="6.0" ry="4.6" fill="#3a3a2c"/><ellipse cx="-1.9" cy="62.9" rx="5.4" ry="4.9" fill="#2a4a28"/><ellipse cx="7.5" cy="59.9" rx="3.4" ry="3.6" fill="#4a3c30"/><ellipse cx="69.8" cy="10.7" rx="4.6" ry="5.8" fill="#4a7a44"/><ellipse cx="98.4" cy="16.7" rx="3.0" ry="4.0" fill="#63a85a"/><ellipse cx="26.2" cy="17.5" rx="5.1" ry="6.9" fill="#58a850"/><ellipse cx="77.4" cy="38.9" rx="4.2" ry="2.8" fill="#3a8a40"/><ellipse cx="9.1" cy="1.2" rx="5.9" ry="4.6" fill="#4a9844"/><ellipse cx="27.1" cy="86.0" rx="4.6" ry="3.8" fill="#3a5a34"/><ellipse cx="105.7" cy="102.5" rx="2.9" ry="2.9" fill="#2e4a2c"/><ellipse cx="96.7" cy="63.3" rx="3.5" ry="4.6" fill="#56a04e"/><ellipse cx="84.6" cy="4.5" rx="3.9" ry="3.1" fill="#3a8a40"/><ellipse cx="17.6" cy="36.8" rx="4.5" ry="3.2" fill="#3a3a2c"/><ellipse cx="13.2" cy="45.6" rx="3.7" ry="4.3" fill="#2e4e30"/><ellipse cx="65.4" cy="12.2" rx="2.6" ry="1.6" fill="#3a3a2c"/><ellipse cx="79.0" cy="101.0" rx="2.6" ry="2.9" fill="#488e46"/><ellipse cx="4.9" cy="30.6" rx="3.0" ry="2.0" fill="#5a8a50"/><ellipse cx="60.9" cy="76.6" rx="5.7" ry="6.7" fill="#4a7a44"/><ellipse cx="89.8" cy="95.8" rx="3.7" ry="4.3" fill="#3a8a40"/><ellipse cx="98.9" cy="42.1" rx="5.3" ry="6.8" fill="#63a85a"/><ellipse cx="-1.3" cy="68.5" rx="3.8" ry="2.3" fill="#2a4a28"/><ellipse cx="6.4" cy="66.1" rx="6.0" ry="7.8" fill="#4a3c30"/><ellipse cx="42.4" cy="76.4" rx="4.5" ry="4.3" fill="#2e4e30"/><ellipse cx="6.8" cy="78.0" rx="2.6" ry="2.8" fill="#2e6a30"/><ellipse cx="-0.4" cy="100.4" rx="2.9" ry="3.5" fill="#2e6a30"/><ellipse cx="26.9" cy="-1.8" rx="3.6" ry="4.1" fill="#58a850"/><ellipse cx="57.7" cy="78.4" rx="3.7" ry="5.0" fill="#5a8a50"/><ellipse cx="101.3" cy="32.3" rx="4.8" ry="3.7" fill="#488e46"/><ellipse cx="91.0" cy="78.5" rx="3.2" ry="2.5" fill="#56a04e"/><ellipse cx="65.2" cy="31.2" rx="3.0" ry="3.0" fill="#2f5a2c"/><ellipse cx="80.2" cy="99.6" rx="3.5" ry="2.6" fill="#488e46"/><ellipse cx="52.1" cy="97.0" rx="5.4" ry="4.9" fill="#2e4e30"/><ellipse cx="54.8" cy="31.1" rx="5.4" ry="7.5" fill="#5a8a50"/><ellipse cx="34.5" cy="86.5" rx="3.5" ry="3.8" fill="#3a3a2c"/><ellipse cx="63.8" cy="30.4" rx="5.3" ry="3.2" fill="#4a7a44"/><ellipse cx="44.4" cy="17.5" rx="5.2" ry="4.2" fill="#4a7a44"/><ellipse cx="90.2" cy="103.3" rx="2.9" ry="2.0" fill="#63a85a"/><ellipse cx="73.6" cy="84.2" rx="5.9" ry="6.7" fill="#4a7a44"/><ellipse cx="93.4" cy="24.7" rx="5.0" ry="6.0" fill="#63a85a"/><ellipse cx="80.6" cy="16.3" rx="3.5" ry="3.0" fill="#2e4a2c"/><ellipse cx="107.8" cy="51.0" rx="6.0" ry="4.4" fill="#2e4a2c"/><ellipse cx="103.0" cy="6.4" rx="5.8" ry="6.8" fill="#56a04e"/><ellipse cx="49.7" cy="18.3" rx="5.6" ry="3.4" fill="#2e4e30"/><ellipse cx="63.6" cy="92.0" rx="5.3" ry="7.2" fill="#5a8a50"/><ellipse cx="35.2" cy="103.1" rx="2.8" ry="3.7" fill="#2f5a2c"/><ellipse cx="22.0" cy="94.2" rx="5.9" ry="8.2" fill="#3f6a3a"/><ellipse cx="111.3" cy="97.7" rx="3.4" ry="4.0" fill="#3a8a40"/><ellipse cx="37.8" cy="5.9" rx="4.0" ry="4.2" fill="#2e6a2e"/><ellipse cx="54.0" cy="0.1" rx="5.3" ry="3.5" fill="#2f5a2c"/><ellipse cx="17.2" cy="33.2" rx="5.3" ry="3.7" fill="#4a7a44"/><ellipse cx="114.0" cy="94.3" rx="4.3" ry="4.9" fill="#488e46"/><ellipse cx="107.7" cy="50.2" rx="5.8" ry="3.9" fill="#56a04e"/><ellipse cx="48.4" cy="57.3" rx="5.4" ry="5.7" fill="#4a7a44"/><ellipse cx="58.2" cy="88.1" rx="4.5" ry="3.8" fill="#5a8a50"/><ellipse cx="108.7" cy="91.0" rx="4.6" ry="3.9" fill="#56a04e"/><ellipse cx="110.3" cy="53.6" rx="4.5" ry="3.4" fill="#63a85a"/><ellipse cx="10.4" cy="-2.5" rx="3.8" ry="3.9" fill="#3c8a3a"/><ellipse cx="57.4" cy="40.3" rx="5.3" ry="5.6" fill="#5a8a50"/><ellipse cx="7.9" cy="15.0" rx="5.8" ry="5.6" fill="#4a9844"/><ellipse cx="28.5" cy="48.1" rx="2.9" ry="2.8" fill="#5a8a50"/><ellipse cx="58.4" cy="8.7" rx="4.0" ry="2.5" fill="#3a3a2c"/><ellipse cx="12.1" cy="81.2" rx="2.6" ry="1.9" fill="#3a5a34"/><ellipse cx="-1.6" cy="27.7" rx="5.0" ry="4.0" fill="#4a9844"/><ellipse cx="9.3" cy="75.9" rx="2.9" ry="3.0" fill="#4a3c30"/><ellipse cx="81.0" cy="72.7" rx="5.6" ry="3.4" fill="#2e4a2c"/><ellipse cx="45.4" cy="54.2" rx="3.1" ry="2.3" fill="#2e4e30"/><ellipse cx="71.7" cy="54.2" rx="5.5" ry="6.0" fill="#4a7a44"/><ellipse cx="24.2" cy="77.0" rx="5.3" ry="7.1" fill="#4a3c30"/><ellipse cx="67.6" cy="93.2" rx="3.2" ry="3.9" fill="#4a7a44"/><ellipse cx="100.8" cy="11.5" rx="3.3" ry="3.9" fill="#2a5a2c"/><ellipse cx="42.4" cy="44.0" rx="5.8" ry="6.0" fill="#4a7a44"/><ellipse cx="20.5" cy="64.8" rx="5.3" ry="3.6" fill="#3f6a3a"/><ellipse cx="76.8" cy="95.4" rx="5.9" ry="4.1" fill="#63a85a"/><ellipse cx="71.3" cy="34.1" rx="6.0" ry="7.6" fill="#2f5a2c"/><ellipse cx="53.4" cy="-0.4" rx="5.2" ry="5.6" fill="#2e4e30"/><ellipse cx="53.3" cy="17.5" rx="2.9" ry="2.1" fill="#4a7a44"/><ellipse cx="112.9" cy="97.1" rx="2.8" ry="1.8" fill="#2e4a2c"/><ellipse cx="51.1" cy="79.6" rx="3.6" ry="3.5" fill="#2e4e30"/><ellipse cx="38.5" cy="19.7" rx="3.8" ry="4.2" fill="#3c8a3a"/><ellipse cx="95.8" cy="16.6" rx="4.1" ry="4.9" fill="#488e46"/><ellipse cx="104.9" cy="62.3" rx="2.8" ry="3.5" fill="#2a5a2c"/><ellipse cx="101.5" cy="83.6" rx="5.0" ry="6.4" fill="#2e4a2c"/><ellipse cx="106.9" cy="58.5" rx="3.2" ry="3.4" fill="#2a5a2c"/><ellipse cx="91.2" cy="24.9" rx="5.7" ry="6.8" fill="#56a04e"/><ellipse cx="92.3" cy="40.8" rx="5.6" ry="7.4" fill="#2e4a2c"/><ellipse cx="40.3" cy="43.6" rx="3.1" ry="2.4" fill="#4a7a44"/><ellipse cx="5.3" cy="33.9" rx="4.1" ry="2.5" fill="#3a3a2c"/><ellipse cx="112.9" cy="94.5" rx="2.7" ry="2.2" fill="#2e4a2c"/><ellipse cx="32.0" cy="20.3" rx="3.9" ry="2.9" fill="#3c8a3a"/><ellipse cx="42.6" cy="105.0" rx="4.7" ry="5.5" fill="#5a8a50"/><ellipse cx="111.7" cy="-0.5" rx="4.7" ry="5.5" fill="#2a5a2c"/><ellipse cx="48.9" cy="51.5" rx="5.2" ry="5.8" fill="#2f5a2c"/><ellipse cx="8.5" cy="24.1" rx="5.7" ry="5.9" fill="#6ab060"/><ellipse cx="45.6" cy="53.2" rx="5.5" ry="3.7" fill="#5a8a50"/><ellipse cx="91.7" cy="5.2" rx="4.6" ry="5.5" fill="#3a8a40"/><ellipse cx="42.2" cy="98.4" rx="3.9" ry="5.3" fill="#5a8a50"/><ellipse cx="60.4" cy="61.4" rx="4.0" ry="4.0" fill="#3a3a2c"/><ellipse cx="58.6" cy="61.6" rx="3.8" ry="3.1" fill="#3a3a2c"/><ellipse cx="62.6" cy="27.6" rx="5.0" ry="4.2" fill="#2f5a2c"/><ellipse cx="87.4" cy="60.3" rx="4.7" ry="4.4" fill="#2e4a2c"/><ellipse cx="42.6" cy="93.9" rx="5.1" ry="3.3" fill="#3a3a2c"/><ellipse cx="5.6" cy="94.8" rx="4.0" ry="3.9" fill="#3a5a34"/><ellipse cx="2.3" cy="7.6" rx="5.3" ry="7.1" fill="#58a850"/><ellipse cx="111.5" cy="85.2" rx="4.6" ry="3.2" fill="#63a85a"/><ellipse cx="45.8" cy="9.7" rx="5.5" ry="4.9" fill="#4a7a44"/><ellipse cx="11.5" cy="44.8" rx="4.8" ry="4.7" fill="#3a3a2c"/><ellipse cx="71.8" cy="70.7" rx="3.8" ry="4.5" fill="#4a7a44"/><ellipse cx="108.5" cy="76.3" rx="3.3" ry="2.3" fill="#2a5a2c"/><ellipse cx="88.8" cy="64.5" rx="3.8" ry="3.1" fill="#2e4a2c"/><ellipse cx="81.8" cy="72.5" rx="3.2" ry="2.6" fill="#56a04e"/><ellipse cx="19.2" cy="23.9" rx="5.9" ry="7.9" fill="#3c8a3a"/><ellipse cx="70.5" cy="-2.0" rx="3.4" ry="2.1" fill="#2f5a2c"/><ellipse cx="9.0" cy="55.5" rx="2.8" ry="1.8" fill="#3a5a34"/><ellipse cx="61.4" cy="65.2" rx="3.8" ry="3.7" fill="#4a7a44"/><ellipse cx="36.6" cy="50.4" rx="3.0" ry="3.8" fill="#2f5a2c"/><ellipse cx="49.3" cy="85.8" rx="5.4" ry="6.6" fill="#5a8a50"/><ellipse cx="46.7" cy="24.9" rx="5.3" ry="4.8" fill="#2e4e30"/><ellipse cx="35.1" cy="56.3" rx="5.1" ry="6.8" fill="#5a8a50"/><ellipse cx="73.5" cy="59.7" rx="4.1" ry="3.5" fill="#2e4e30"/><ellipse cx="6.7" cy="57.9" rx="4.2" ry="4.8" fill="#4a3c30"/><ellipse cx="93.3" cy="-2.0" rx="3.6" ry="4.8" fill="#63a85a"/><ellipse cx="6.6" cy="29.8" rx="5.0" ry="5.8" fill="#2e6a2e"/><ellipse cx="100.2" cy="20.6" rx="4.8" ry="4.1" fill="#3a8a40"/><ellipse cx="34.7" cy="44.6" rx="4.6" ry="6.1" fill="#3a3a2c"/><ellipse cx="48.2" cy="83.7" rx="3.6" ry="3.0" fill="#5a8a50"/><ellipse cx="110.2" cy="75.8" rx="4.3" ry="2.9" fill="#2a5a2c"/><ellipse cx="-0.2" cy="70.1" rx="4.5" ry="5.6" fill="#3f6a3a"/><ellipse cx="40.1" cy="39.1" rx="3.0" ry="3.3" fill="#4a7a44"/><ellipse cx="17.7" cy="79.0" rx="5.6" ry="4.6" fill="#2a4a28"/><ellipse cx="22.9" cy="3.2" rx="3.1" ry="2.6" fill="#3c8a3a"/><ellipse cx="73.2" cy="83.9" rx="2.7" ry="2.8" fill="#2e4e30"/><ellipse cx="6.8" cy="5.8" rx="5.1" ry="6.7" fill="#3c8a3a"/><ellipse cx="0.0" cy="67.6" rx="2.8" ry="3.6" fill="#2e6a30"/><ellipse cx="25.7" cy="20.8" rx="5.2" ry="5.3" fill="#4a9844"/><ellipse cx="43.1" cy="33.5" rx="5.9" ry="6.7" fill="#5a8a50"/><ellipse cx="54.1" cy="83.9" rx="2.8" ry="3.0" fill="#2f5a2c"/><ellipse cx="45.0" cy="86.2" rx="4.8" ry="6.2" fill="#5a8a50"/><ellipse cx="94.6" cy="93.0" rx="5.9" ry="6.5" fill="#63a85a"/><ellipse cx="39.4" cy="-1.9" rx="2.9" ry="3.9" fill="#58a850"/><ellipse cx="25.7" cy="14.5" rx="4.7" ry="5.4" fill="#2e6a2e"/><ellipse cx="20.9" cy="42.9" rx="3.5" ry="4.8" fill="#2f5a2c"/><ellipse cx="52.2" cy="75.9" rx="3.6" ry="2.6" fill="#4a7a44"/><ellipse cx="103.7" cy="78.3" rx="2.6" ry="2.5" fill="#3a8a40"/><ellipse cx="33.6" cy="18.3" rx="3.8" ry="4.0" fill="#6ab060"/><ellipse cx="80.9" cy="61.2" rx="3.3" ry="2.5" fill="#2a5a2c"/><ellipse cx="44.1" cy="95.4" rx="5.8" ry="6.4" fill="#2e4e30"/><ellipse cx="53.1" cy="25.1" rx="5.6" ry="7.5" fill="#3a3a2c"/><ellipse cx="74.2" cy="80.3" rx="2.8" ry="3.6" fill="#5a8a50"/><ellipse cx="2.8" cy="99.3" rx="5.3" ry="4.8" fill="#3f6a3a"/><ellipse cx="90.0" cy="80.6" rx="5.3" ry="3.4" fill="#56a04e"/><ellipse cx="101.4" cy="91.4" rx="5.7" ry="5.4" fill="#56a04e"/><ellipse cx="80.5" cy="62.5" rx="3.1" ry="2.2" fill="#2a5a2c"/><rect x="24" y="0" width="5" height="80" fill="#3a3428" opacity="0.45"/><rect x="44" y="0" width="4" height="30" fill="#3a3428" opacity="0.4"/><rect x="86" y="0" width="4" height="70" fill="#3a3028" opacity="0.35"/><rect x="0" y="62" width="22" height="26" fill="#2a3a26" opacity="0.5"/></g><g filter="url(#bl2)"><path d="M-2 92 L18 88 L32 86 L31 118 L-2 118 Z" fill="#d4eadc"/><path d="M90 99 L97 104 L95 113 L88 113 Z" fill="#dce4dc"/><path d="M36 31 Q57 25 78 32 L83 52 Q85 72 84 84 Q92 96 95 118 L22 118 Q25 96 32 86 Q31 70 32 50 Z" fill="url(#bh)"/><ellipse cx="36.5" cy="27" rx="7.5" ry="9.5" fill="#0f0c14"/><ellipse cx="78" cy="31.5" rx="8" ry="9.5" fill="#0f0c14"/><path d="M42 33 Q57 28 72 34 L70 38 Q57 34 44 37 Z" fill="#2e3850" opacity="0.45"/><path d="M34 62 Q38 80 36 100 L40 100 Q42 80 38 62 Z" fill="#3a4658" opacity="0.2"/><path d="M48 42 Q54 39 61 42 L63 57 Q62 62 55 62 Q47 62 46 57 Z" fill="#c0b6ae"/><ellipse cx="54.5" cy="56.5" rx="4" ry="3" fill="#1a1418"/></g></g></svg></div>
      <div class="a" style="left:127px;top:36px;font-size:16px;letter-spacing:-0.1px;white-space:nowrap;line-height:18.6px"><b>Endereco:</b><br>Alameda Barcelona, nro 300, Bairro<br>V. Clementino, São Paulo - SP</div>
      <div class="a" style="left:127px;top:123px;width:70px;height:22px;background:#ece9d8;border:1px solid #8e8e8e;font-size:13px;letter-spacing:0.3px;text-align:center;line-height:19px">Fechar</div>
    </div>
    <!-- scrollbar -->
    <div class="a" style="left:879px;top:0;width:18px;height:531px;background:linear-gradient(90deg,#eeece2,#fbfbf7 30%,#fefefc 65%,#f2f0e6)"></div>
    <div class="a" style="left:879px;top:1px;width:15px;height:15px;border:1px solid #fff;border-radius:2px;box-shadow:1px 1px 0 #a8bce4;background:linear-gradient(135deg,#d0defc,#b8ccf8 60%,#c4d6fc)"><svg style="left:2px;top:3px" width="9" height="6" viewBox="0 0 9 6"><path d="M1 5 L4.5 1.5 L8 5" fill="none" stroke="#4d6185" stroke-width="2" stroke-linecap="square"/></svg></div>
    <div class="a" style="left:879px;top:18px;width:15px;height:397px;border:1px solid #fff;border-radius:2px;box-shadow:1px 1px 0 #a8bce4;background:linear-gradient(90deg,#c6d4fc,#c8d6fc 50%,#b4cafa 85%,#aec4f4)">
      <div class="a" style="left:3px;top:193px;width:7px;height:1px;background:#eef2fe;box-shadow:0 2px 0 #eef2fe,0 4px 0 #eef2fe,0 6px 0 #eef2fe"></div>
      <div class="a" style="left:4px;top:194px;width:7px;height:1px;background:#8ca8e8;box-shadow:0 2px 0 #8ca8e8,0 4px 0 #8ca8e8,0 6px 0 #8ca8e8"></div>
    </div>
    <div class="a" style="left:879px;top:514px;width:15px;height:16px;border:1px solid #fff;border-radius:2px;box-shadow:1px 1px 0 #a8bce4;background:linear-gradient(135deg,#d0defc,#b8ccf8 60%,#c4d6fc)"><svg style="left:2px;top:5px" width="9" height="6" viewBox="0 0 9 6"><path d="M1 1 L4.5 4.5 L8 1" fill="none" stroke="#4d6185" stroke-width="2" stroke-linecap="square"/></svg></div>
  </div>
  <div class="a" style="left:0;top:665px;width:906px;height:4px;background:linear-gradient(#0a4ee0,#0030b0 60%,#001a80)"></div>
  <div id="status" class="a"><div class="a" style="left:0;top:2px;width:898px;height:1px;background:#aca899"></div><div class="a" style="left:3px;top:4px;font-size:11px;white-space:nowrap">Done</div></div>
</div>
</body></html>
